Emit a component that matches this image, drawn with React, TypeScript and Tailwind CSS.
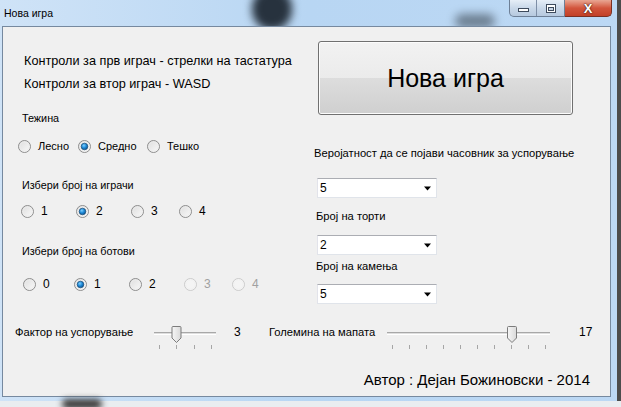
import React from "react";

function Radio({ checked = false, disabled = false }: { checked?: boolean; disabled?: boolean }) {
  return (
    <svg width="13" height="13" viewBox="0 0 13 13" className="shrink-0">
      <defs>
        <linearGradient id="rfill" x1="0" y1="0" x2="1" y2="1">
          <stop offset="0" stopColor="#dcdcdc" />
          <stop offset="1" stopColor="#fbfbfb" />
        </linearGradient>
        <radialGradient id="rdot" cx="0.4" cy="0.35" r="0.7">
          <stop offset="0" stopColor="#7fd0ff" />
          <stop offset="0.5" stopColor="#1f8ad8" />
          <stop offset="1" stopColor="#0b4f8a" />
        </radialGradient>
      </defs>
      <circle cx="6.5" cy="6.5" r="6" fill={disabled ? "#f4f4f4" : "url(#rfill)"} stroke={disabled ? "#cbcbcb" : "#8d8d8d"} strokeWidth="1" />
      <circle cx="6.5" cy="6.5" r="4.6" fill="none" stroke={disabled ? "#f0f0f0" : "#ececec"} strokeWidth="0.8" />
      {checked && <circle cx="6.5" cy="6.5" r="3.3" fill="url(#rdot)" stroke="#1a4d78" strokeWidth="0.7" />}
    </svg>
  );
}

function RadioItem({ label, w, checked, disabled }: { label: string; w: string; checked?: boolean; disabled?: boolean }) {
  return (
    <div className={`flex items-center gap-[7px] ${w}`}>
      <Radio checked={checked} disabled={disabled} />
      <span className={disabled ? "text-[#a0a0a0]" : "text-black"}>{label}</span>
    </div>
  );
}

function Slider({ width, ticks, thumb }: { width: number; ticks: number[]; thumb: number }) {
  return (
    <svg width={width} height="30" viewBox={`0 0 ${width} 30`} className="shrink-0">
      <defs>
        <linearGradient id="thumbg" x1="0" y1="0" x2="1" y2="0">
          <stop offset="0" stopColor="#f6f6f6" />
          <stop offset="1" stopColor="#d9d9d9" />
        </linearGradient>
      </defs>
      <line x1="2" y1="10.5" x2={width - 2} y2="10.5" stroke="#a8a8a8" />
      <line x1="2" y1="11.5" x2={width - 2} y2="11.5" stroke="#dedede" />
      <line x1="2" y1="12.5" x2={width - 2} y2="12.5" stroke="#ffffff" />
      {ticks.map((t) => (
        <line key={t} x1={t + 0.5} y1="23" x2={t + 0.5} y2="27" stroke="#a6a6a6" />
      ))}
      <path
        d={`M ${thumb - 4.5} 5.5 Q ${thumb - 4.5} 4.5 ${thumb - 3.5} 4.5 H ${thumb + 3.5} Q ${thumb + 4.5} 4.5 ${thumb + 4.5} 5.5 V 16 L ${thumb} 20.5 L ${thumb - 4.5} 16 Z`}
        fill="url(#thumbg)"
        stroke="#7b7b7b"
      />
    </svg>
  );
}

function Combo({ value }: { value: string }) {
  return (
    <div className="w-[120px] h-[20px] bg-white border border-[#e0e4ea] border-t-[#abadb3] border-l-[#e2e3ea] flex items-center pl-[2px] pr-[4px] text-[12px] leading-none">
      <span className="flex-1">{value}</span>
      <svg width="8" height="5" viewBox="0 0 8 5">
        <path d="M0 0.5 H7 L3.5 4.5 Z" fill="#000" />
      </svg>
    </div>
  );
}

export default function App() {
  const ticks2 = Array.from({ length: 10 }, (_, i) => 7 + i * 17);
  return (
    <div className="w-[621px] h-[407px] flex flex-col overflow-hidden bg-[#4a4a4a] font-['Liberation_Sans',Arial,sans-serif] text-black">
      <div className="flex h-[401px]">
        {/* window */}
        <div className="relative w-[617px] h-[401px] flex flex-col bg-gradient-to-r from-[#cfe3f7] via-[#b8d6f3] to-[#bcd8f4] pl-[2px] pr-[6px] pb-[4px]">
          {/* glass blobs */}
          <div className="absolute left-[252px] top-[-12px] w-[40px] h-[42px] rounded-full bg-[#27323e] blur-[4px]" />
          <div className="absolute left-[455px] top-[14px] w-[40px] h-[14px] rounded-full bg-[#4a5866] blur-[5px] opacity-70" />
          {/* title bar */}
          <div className="relative h-[26px] flex items-start shrink-0">
            <span className="text-[10.5px] leading-none mt-[8px] ml-[2px] text-black">Нова игра</span>
            <div className="ml-auto mr-[-1px] flex h-[17px]">
              <div className="flex h-[17px] border border-t-0 border-[#6d7f96] rounded-bl-[5px] overflow-hidden bg-gradient-to-b from-[#e6eef7] via-[#c9d8e9] to-[#b6c9df]">
                <div className="w-[27px] flex items-center justify-center border-r border-[#7d8ea6]">
                  <div className="w-[11px] h-[4px] mt-[3px] bg-white border border-[#3d4a5c]" />
                </div>
                <div className="w-[27px] flex items-center justify-center">
                  <div className="w-[10px] h-[9px] bg-white border border-[#3d4a5c] flex items-center justify-center">
                    <div className="w-[6px] h-[4px] mt-[1px] bg-[#c9d6e6] border border-[#3d4a5c]" />
                  </div>
                </div>
              </div>
              <div className="w-[47px] h-[17px] border border-t-0 border-l-0 border-[#7a2f22] rounded-br-[5px] bg-gradient-to-b from-[#e8a693] via-[#d2553c] to-[#c24128] flex items-center justify-center">
                <span className="text-white text-[13px] font-bold leading-none [text-shadow:0_0_2px_#3a1a10,0_0_1px_#3a1a10]">X</span>
              </div>
            </div>
          </div>
          {/* client */}
          <div className="relative flex-1 border border-[#76899f] bg-[#f0f0f0] flex flex-col text-[10.8px] leading-[14px]">
            <div className="flex">
              {/* left column */}
              <div className="w-[311px] flex flex-col">
                <div className="h-[14px] mt-[27px] pl-[21px] text-[12.7px]">Контроли за прв играч - стрелки на тастатура</div>
                <div className="h-[14px] mt-[9px] pl-[21px] text-[12.7px]">Контроли за втор играч - WASD</div>
                <div className="h-[14px] mt-[20px] pl-[19px]">Тежина</div>
                <div className="h-[14px] mt-[14px] pl-[15px] flex text-[11px]">
                  <RadioItem label="Лесно" w="w-[60px]" />
                  <RadioItem label="Средно" w="w-[69px]" checked />
                  <RadioItem label="Тешко" w="w-[60px]" />
                </div>
                <div className="h-[14px] mt-[25px] pl-[19px]">Избери број на играчи</div>
                <div className="h-[14px] mt-[12px] pl-[18px] flex text-[12px]">
                  <RadioItem label="1" w="w-[55px]" />
                  <RadioItem label="2" w="w-[55px]" checked />
                  <RadioItem label="3" w="w-[48px]" />
                  <RadioItem label="4" w="w-[40px]" />
                </div>
                <div className="h-[14px] mt-[26px] pl-[19px]">Избери број на ботови</div>
                <div className="h-[14px] mt-[19px] pl-[20px] flex text-[12px]">
                  <RadioItem label="0" w="w-[51px]" />
                  <RadioItem label="1" w="w-[55px]" checked />
                  <RadioItem label="2" w="w-[55px]" />
                  <RadioItem label="3" w="w-[48px]" disabled />
                  <RadioItem label="4" w="w-[40px]" disabled />
                </div>
              </div>
              {/* right column */}
              <div className="flex flex-col">
                <button className="ml-[4px] mt-[14px] w-[255px] h-[74px] rounded-[3px] border border-[#707070] bg-[linear-gradient(#f2f2f2_0%,#ebebeb_50%,#dddddd_50%,#cfcfcf_100%)] shadow-[inset_0_0_0_1px_#fcfcfc] flex items-center justify-center">
                  <span className="text-[25px] leading-none text-black">Нова игра</span>
                </button>
                <div className="h-[14px] mt-[31px] text-[11.2px]">Веројатност да се појави часовник за успорување</div>
                <div className="mt-[18px] ml-[3px]"><Combo value="5" /></div>
                <div className="h-[14px] mt-[11px] ml-[2px] text-[11.2px]">Број на торти</div>
                <div className="mt-[12px] ml-[3px]"><Combo value="2" /></div>
                <div className="h-[14px] mt-[4px] ml-[2px] text-[11.2px]">Број на камења</div>
                <div className="mt-[11px] ml-[3px]"><Combo value="5" /></div>
              </div>
            </div>
            {/* sliders */}
            <div className="mt-[18px] h-[30px] flex items-start pl-[12px] text-[11.2px]">
              <div className="w-[137px] mt-[3px]">Фактор на успорување</div>
              <Slider width={66} ticks={[7, 24, 42, 59]} thumb={24.5} />
              <div className="ml-[16px] mt-[3px] w-[7px] text-[12px]">3</div>
              <div className="ml-[28px] w-[116px] mt-[3px]">Големина на мапата</div>
              <Slider width={167} ticks={ticks2} thumb={127} />
              <div className="ml-[27px] mt-[3px] text-[12px]">17</div>
            </div>
            {/* author */}
            <div className="mt-[19px] h-[18px] flex justify-end pr-[20px] text-[15px] leading-[18px]">
              Автор : Дејан Божиновски - 2014
            </div>
          </div>
        </div>
        <div className="flex-1 bg-[#4c4c4c]" />
      </div>
      <div className="relative flex-1 bg-[#e9edf0]">
        <div className="absolute left-[62px] top-[-2px] w-[40px] h-[10px] rounded-full bg-[#3a3a3a] blur-[3px]" />
      </div>
    </div>
  );
}
